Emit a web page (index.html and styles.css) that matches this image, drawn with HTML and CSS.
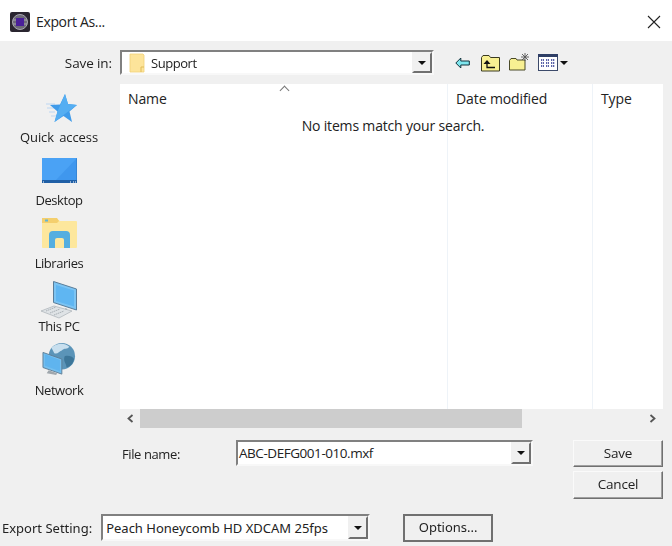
FILE: index.html
```html
<!DOCTYPE html>
<html lang="en">
<head>
<meta charset="utf-8">
<title>Export As...</title>
<link rel="stylesheet" href="styles.css">
</head>
<body>
<div class="dialog">
  <header class="titlebar">
    <svg class="app-icon" width="20" height="20" viewBox="0 0 20 20"><rect width="20" height="20" rx="2" fill="#2a2530"/><circle cx="10" cy="10" r="7.500" fill="#6d6a78" stroke="#a8a6b0" stroke-width="1"/><rect x="6" y="6" width="8" height="8" fill="#4a1f9a"/><path d="M3 8h3M14 8h3M3 12h3M14 12h3" stroke="#c0bec8" stroke-width=".7"/></svg>
    <span class="title">Export As...</span>
    <svg class="close" width="14" height="14" viewBox="0 0 14 14"><path d="M1 1l12 12M13 1L1 13" stroke="#222" stroke-width="1.100" fill="none"/></svg>
  </header>

  <div class="toolbar">
    <span class="savein-label">Save in:</span>
    <div class="combo savein">
      <svg width="16" height="20" viewBox="0 0 16 20"><path d="M1 1h13l1 1v17H1z" fill="#fde49a" stroke="#f0d078" stroke-width=".8"/><path d="M12 19v-5h3" fill="none" stroke="#e0bc58"/></svg>
      <span class="combo-text">Support</span>
      <span class="drop"><i class="tri"></i></span>
    </div>
    <div class="tools">
      <svg width="15" height="12" viewBox="0 0 15 12"><path d="M.8 6l5-5v3h8.500v4H5.800v3z" fill="#7fe6ee" stroke="#10303a" stroke-width="1"/></svg>
      <svg class="t-up" width="19" height="18" viewBox="0 0 19 18"><path d="M.5 17V3.500l1.500-2h6l1.500 2h9V17z" fill="#f8f092" stroke="#3a3a20"/><path d="M6 9v4.500h8" fill="none" stroke="#111" stroke-width="1.300"/><path d="M6 6l-3.500 4h7z" fill="#111"/></svg>
      <svg class="t-new" width="21" height="19" viewBox="0 0 21 19"><path d="M.5 18V8.500l1.500-2h5l1 1.500h8v10z" fill="#f8f092" stroke="#4a4a28"/><path d="M16 1v8M12 5h8M13 2l6 6M19 2l-6 6" stroke="#555" stroke-width=".9"/></svg>
      <svg class="t-view" width="20" height="17" viewBox="0 0 20 17"><rect x=".5" y=".5" width="19" height="16" fill="#fff" stroke="#3c4a6a"/><rect x="0" y="0" width="20" height="3" fill="#2f3f66"/><path d="M3 6h3M8 6h3M13 6h4M3 9h3M8 9h3M13 9h4M3 12h3M8 12h3M13 12h4" stroke="#24308c" stroke-width="1.400" stroke-dasharray="1.300 .7"/></svg>
      <i class="tri view-tri"></i>
    </div>
  </div>

  <div class="main">
    <nav class="places">
      <div class="place p-quick">
        <svg width="34" height="32" viewBox="0 0 34 32"><path d="M3 11h9M4 15h7M6 19h6M8 23h5" stroke="#bcd6f2" stroke-width="1"/><path d="M22 1l3 10 9 1-7.500 6.500L29 29l-8.500-6-9 6 3-10.500L7 12l10-.5z" fill="#3f9bea"/><path d="M22 1l3 10 9 1-13.500 10L11.500 29l3-10.500z" fill="#55aef2"/></svg>
        <span>Quick access</span>
      </div>
      <div class="place p-desk">
        <svg width="35" height="25" viewBox="0 0 35 25"><rect width="35" height="25" fill="#3f97ee"/><rect x="0" y="0" width="35" height="25" fill="none" stroke="#2e74bf"/><path d="M0 0h35L14 22H0z" fill="#4aa2f5"/><rect y="22" width="35" height="3" fill="#1f5fa6"/><path d="M1 24h1M28 24h1M31 24h1M33 24h1" stroke="#fff"/></svg>
        <span>Desktop</span>
      </div>
      <div class="place p-lib">
        <svg width="35" height="30" viewBox="0 0 35 30"><path d="M0 1a1 1 0 0 1 1-1h13l4 3h16a1 1 0 0 1 1 1v25a1 1 0 0 1-1 1H1a1 1 0 0 1-1-1z" fill="#fde79d"/><path d="M0 0h15l2 3-2 2H0z" fill="#f4cf6d"/><rect x="3" y="1.500" width="3" height="2" fill="#62b6d6"/><path d="M7 30V17a4 4 0 0 1 4-4h13a4 4 0 0 1 4 4v13h-6v-8a2 2 0 0 0-2-2h-5a2 2 0 0 0-2 2v8z" fill="#54aee0"/></svg>
        <span>Libraries</span>
      </div>
      <div class="place p-pc">
        <svg width="38" height="38" viewBox="0 0 38 38"><path d="M13.500 .5l23 7.500v21l-23-7.500z" fill="#7cc4f3" stroke="#5a7d99"/><path d="M16 4l18 5.500v16L16 20z" fill="#5fb6f2"/><path d="M26 27l2 3-4-1z" fill="#8c969e"/><path d="M1 30l13-5 18 5-13 7z" fill="#dfe3e6" stroke="#a9b0b6" stroke-width=".7"/><path d="M6 30l10-4M10 32l10-4M14 34l10-4" stroke="#aab1b7" stroke-dasharray="1.500 .6"/></svg>
        <span>This PC</span>
      </div>
      <div class="place p-net">
        <svg width="34" height="33" viewBox="0 0 36 35"><circle cx="21" cy="14" r="14" fill="#5b94b8"/><path d="M10 5c5-5 14-6 19-1-2 3-6 1-8 4-3 1-4 4-8 3z" fill="#c8dfee"/><path d="M24 14c4-1 8 0 10 3-1 5-4 8-8 9 0-4-4-7-2-12z" fill="#3d7699"/><path d="M1 10l20 7v16L1 26z" fill="#74bfef" stroke="#5d7d96"/><path d="M3 12l16 6v12L3 24z" fill="#5fb4ee"/><path d="M7 29l9 3-1 2-10-2z" fill="#a0a7ad"/></svg>
        <span>Network</span>
      </div>
    </nav>

    <section class="files">
      <div class="list">
        <i class="sort"></i>
        <div class="head">
          <span class="col c-name">Name</span>
          <span class="col c-date">Date modified</span>
          <span class="col c-type">Type</span>
        </div>
        <p class="empty">No items match your search.</p>
      </div>
      <div class="hscroll">
        <svg class="arrow" width="9" height="9" viewBox="0 0 9 9"><path d="M6.500 1L2.500 4.500l4 3.500" fill="none" stroke="#555" stroke-width="1.800"/></svg>
        <div class="track"><div class="thumb"></div></div>
        <svg class="arrow" width="9" height="9" viewBox="0 0 9 9"><path d="M2.500 1l4 3.500-4 3.500" fill="none" stroke="#555" stroke-width="1.800"/></svg>
      </div>
    </section>
  </div>

  <div class="namebar">
    <div class="name-row">
      <span class="name-label">File name:</span>
      <div class="combo filename">
        <span class="combo-text">ABC-DEFG001-010.mxf</span>
        <span class="drop"><i class="tri"></i></span>
      </div>
    </div>
    <div class="actions">
      <button class="btn" type="button">Save</button>
      <button class="btn" type="button">Cancel</button>
    </div>
  </div>

  <div class="exportbar">
    <span class="wide">Export Setting:</span>
    <div class="combo setting">
      <span class="combo-text wide">Peach Honeycomb HD XDCAM 25fps</span>
      <span class="drop"><i class="tri"></i></span>
    </div>
    <button class="btn options wide" type="button">Options...</button>
  </div>
</div>
</body>
</html>
```

FILE: styles.css
```css
* { box-sizing: border-box; }
html, body { margin: 0; padding: 0; }
body {
  width: 672px;
  height: 546px;
  overflow: hidden;
  font-family: "Open Sans", "Noto Sans", sans-serif;
  font-size: 13.5px;
  color: #222;
  background: #f0f0f0;
}
.dialog { display: flex; flex-direction: column; height: 546px; filter: blur(.35px); }

.titlebar {
  height: 41px;
  background: #fff;
  display: flex;
  align-items: center;
  padding: 2px 11px 0 10px;
  flex: none;
}
.title { margin-left: 6px; font-size: 14px; letter-spacing: -.35px; }
.close { margin-left: auto; }

.toolbar {
  height: 43px;
  flex: none;
  display: flex;
  align-items: center;
}
.savein-label { width: 112px; text-align: right; letter-spacing: -.1px; }
.combo {
  display: flex;
  align-items: center;
  background: #fff;
  border: 2px solid;
  border-color: #808080 #f8f8f8 #f8f8f8 #808080;
  position: relative;
}
.combo-text { white-space: nowrap; letter-spacing: -.2px; }
.savein { width: 314px; height: 25px; margin-left: 8px; padding-left: 7px; gap: 6px; }
.savein .combo-text { font-size: 13px; letter-spacing: -.45px; }
.drop {
  margin-left: auto;
  width: 20px;
  height: 100%;
  background: #f0f0f0;
  border: 2px solid;
  border-color: #f0f0f0 #707070 #707070 #f0f0f0;
  display: flex;
  align-items: center;
  justify-content: center;
  flex: none;
}
.tri {
  display: block;
  width: 0;
  height: 0;
  border-left: 4px solid transparent;
  border-right: 4px solid transparent;
  border-top: 4px solid #111;
}
.tools { display: flex; align-items: center; margin-left: 21px; }
.t-up { margin-left: 11px; }
.t-new { margin-left: 9px; margin-top: -2px; }
.t-view { margin-left: 8px; }
.view-tri { margin-left: 2px; }

.main { display: flex; height: 344px; flex: none; }
.places { width: 120px; flex: none; display: flex; flex-direction: column; }
.place {
  height: 63px;
  flex: none;
  display: flex;
  flex-direction: column;
  align-items: center;
  justify-content: flex-end;
  padding-right: 2px;
  line-height: 18px;
  font-size: 13px;
  letter-spacing: -.45px;
}
.p-quick { height: 62px; word-spacing: 2px; letter-spacing: -.1px; }
.p-quick svg { margin: 0 0 3px 2px; }
.p-desk svg { margin-bottom: 8px; }
.p-lib svg { margin-bottom: 6px; }
.p-pc svg { margin-bottom: -2px; }
.p-net { height: 64px; }
.p-net svg { margin-bottom: 5px; }

.files { width: 543px; display: flex; flex-direction: column; flex: none; }
.list {
  position: relative;
  height: 325px;
  flex: none;
  background: #fff;
  background-image:
    linear-gradient(#eef3f8, #eef3f8),
    linear-gradient(#eef3f8, #eef3f8);
  background-size: 1px 100%, 1px 100%;
  background-position: 327px 0, 472px 0;
  background-repeat: no-repeat;
}
.head { display: flex; height: 29px; font-size: 14px; }
.col { display: flex; align-items: center; padding-left: 8px; height: 29px; letter-spacing: -.1px; }
.c-name { width: 328px; }
.c-date { width: 145px; }
.c-type { width: 70px; }
.sort {
  position: absolute;
  left: 161px;
  top: 3px;
  width: 7px;
  height: 7px;
  border-left: 1px solid #777;
  border-top: 1px solid #777;
  transform: rotate(45deg);
}
.empty { margin: 3px 0 0; text-align: center; font-size: 14px; padding-left: 3px; line-height: 20px; letter-spacing: -.17px; }

.hscroll { height: 19px; display: flex; align-items: center; flex: none; }
.arrow { flex: none; margin: 0 6px; }
.track { flex: 1; align-self: stretch; }
.thumb { width: 382px; height: 100%; background: #cdcdcd; }
.hscroll .arrow:first-child { margin-right: 5px; }
.hscroll .arrow:last-child { margin: 0 6px 0 0; }

.namebar {
  display: flex;
  padding: 12px 9px 0 122px;
  height: 86px;
  flex: none;
}
.name-row { display: flex; height: 26px; align-items: center; }
.name-label { width: 114px; font-size: 13px; letter-spacing: -.4px; padding-top: 2px; }
.filename { width: 297px; height: 26px; padding-left: 1px; }
.filename .combo-text { letter-spacing: -.45px; }
.actions { margin-left: auto; display: flex; flex-direction: column; gap: 4px; }
.btn {
  width: 90px;
  height: 27px;
  padding: 0 0 2px;
  font: inherit;
  font-size: 13.5px;
  color: #222;
  background: #f0f0f0;
  border: 1px solid;
  border-color: #fafafa #707070 #707070 #fafafa;
  box-shadow: inset -1px -1px 0 #a0a0a0;
  letter-spacing: -.2px;
}
.actions .btn:last-child { height: 28px; }

.exportbar { display: flex; align-items: center; height: 27px; padding-left: 2px; flex: none; }
.wide { font-family: "Noto Sans", "Open Sans", sans-serif; font-size: 13px; letter-spacing: 0; white-space: nowrap; }
.combo-text.wide { letter-spacing: 0; }
.setting { width: 269px; height: 27px; margin-left: 9px; padding-left: 3px; }
.btn.options {
  width: 90px;
  margin-left: 33px;
  height: 28px;
  border: 2px solid #707070;
  box-shadow: none;
  font-size: 13px;
  letter-spacing: 0;
}
```
